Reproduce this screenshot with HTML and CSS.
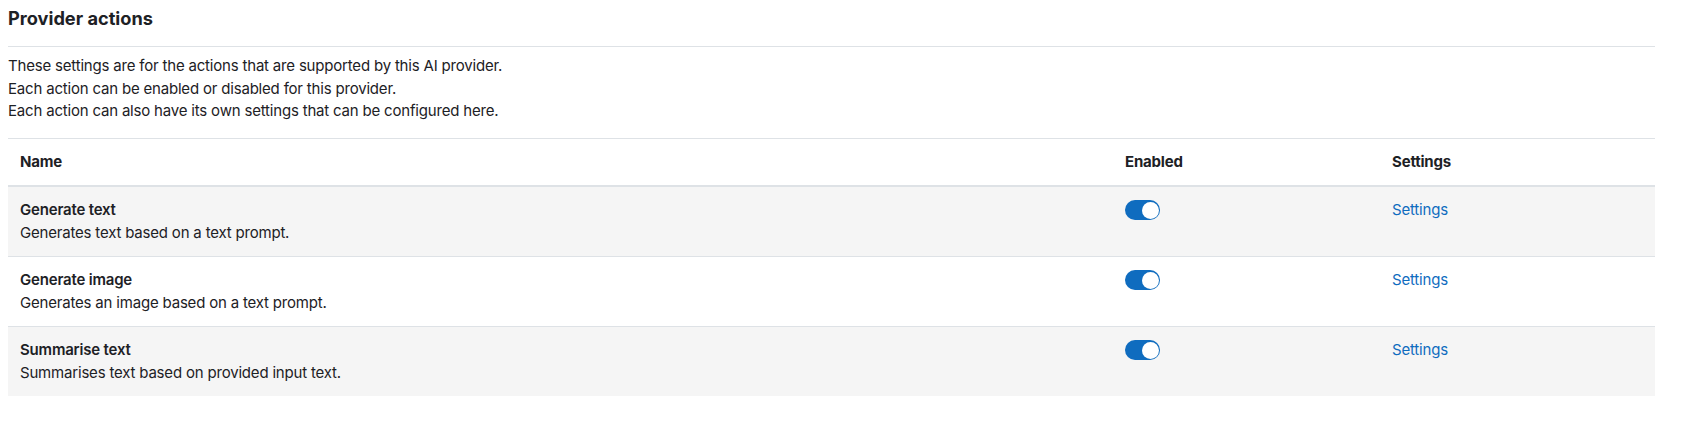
FILE: index.html
```html
<!DOCTYPE html>
<html lang="en">
<head>
    <meta charset="UTF-8">
    <meta name="viewport" content="width=device-width, initial-scale=1.0">
    <title>Provider actions</title>
    <link rel="stylesheet" href="styles.css">
</head>
<body>
    <div class="page">
        <h3 class="section-title">Provider actions</h3>
        <div class="intro">
            <p>These settings are for the actions that are supported by this AI provider.<br>
            Each action can be enabled or disabled for this provider.<br>
            Each action can also have its own settings that can be configured here.</p>
        </div>
        <table class="actions-table">
            <thead>
                <tr>
                    <th class="col-name">Name</th>
                    <th class="col-enabled">Enabled</th>
                    <th class="col-settings">Settings</th>
                </tr>
            </thead>
            <tbody>
                <tr>
                    <td>
                        <strong>Generate text</strong>
                        <div class="desc">Generates text based on a text prompt.</div>
                    </td>
                    <td><label class="switch"><input type="checkbox" checked><span class="slider"></span></label></td>
                    <td><a href="#">Settings</a></td>
                </tr>
                <tr>
                    <td>
                        <strong>Generate image</strong>
                        <div class="desc">Generates an image based on a text prompt.</div>
                    </td>
                    <td><label class="switch"><input type="checkbox" checked><span class="slider"></span></label></td>
                    <td><a href="#">Settings</a></td>
                </tr>
                <tr>
                    <td>
                        <strong>Summarise text</strong>
                        <div class="desc">Summarises text based on provided input text.</div>
                    </td>
                    <td><label class="switch"><input type="checkbox" checked><span class="slider"></span></label></td>
                    <td><a href="#">Settings</a></td>
                </tr>
            </tbody>
        </table>
    </div>
</body>
</html>
```
FILE: styles.css
```css
body {
    margin: 0;
    font-family: Inter, Roboto, "Liberation Sans", sans-serif;
    font-size: 15px;
    line-height: 1.5;
    letter-spacing: -0.19px;
    color: #1d2125;
    background: #fff;
}
.page {
    width: 1647px;
    margin-left: 8px;
}
.section-title {
    margin: 0;
    padding-top: 6px;
    height: 47px;
    box-sizing: border-box;
    font-size: 18.2px;
    font-weight: 700;
    letter-spacing: 0;
    line-height: 24px;
    border-bottom: 1px solid #dee2e6;
}
.intro p {
    margin: 0;
    padding: 8px 0 15px;
    border-bottom: 1px solid #dee2e6;
}
.actions-table {
    width: 100%;
    border-collapse: collapse;
}
.actions-table th,
.actions-table td {
    text-align: left;
    vertical-align: top;
    padding: 12px;
}
.actions-table th {
    font-weight: 700;
    border-bottom: 2px solid #dee2e6;
}
.actions-table td {
    border-top: 1px solid #dee2e6;
}
.actions-table tbody tr:first-child td {
    border-top: none;
}
.actions-table tbody tr:nth-child(odd) {
    background-color: #f5f5f5;
}
.col-name {
    width: 1081px;
}
.col-enabled {
    width: 243px;
}
.actions-table strong {
    font-weight: 600;
}
.actions-table a {
    color: #0f6cbf;
    text-decoration: none;
}
.switch {
    position: relative;
    display: inline-block;
    width: 35px;
    height: 20px;
    margin-top: 1px;
    vertical-align: top;
}
.switch input {
    display: none;
}
.slider {
    position: absolute;
    inset: 0;
    background: #0f6cbf;
    border-radius: 10px;
}
.slider::after {
    content: '';
    position: absolute;
    top: 1.5px;
    right: 1.5px;
    width: 17px;
    height: 17px;
    border-radius: 50%;
    background: #fff;
}
```
